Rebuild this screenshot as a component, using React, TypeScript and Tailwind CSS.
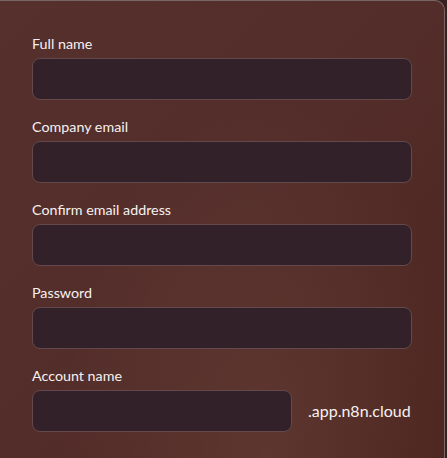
const fields = ['Full name', 'Company email', 'Confirm email address', 'Password'];

export default function App() {
    return (
        <div className="w-[447px] h-[458px] overflow-hidden bg-[#3a2020]" style={{ fontFamily: 'Lato, "Liberation Sans", sans-serif' }}>
            <div className="relative h-[480px] w-[445px] rounded-tr-[10px] border-t border-r border-[#7a6564] bg-gradient-to-br from-[#55302d] via-[#532d29] to-[#4b241e] px-8 pt-[33px]">
                <div className="pointer-events-none absolute inset-0 bg-[radial-gradient(ellipse_at_60%_95%,rgba(120,80,70,0.35),transparent_55%)]" />
                <div className="relative flex flex-col gap-[17px]">
                    {fields.map((label) => (
                        <div key={label} className="flex flex-col gap-1">
                            <label className="text-[14.3px] leading-5 text-[#f6f1f1]">{label}</label>
                            <input
                                type={label === 'Password' ? 'password' : 'text'}
                                className="h-[42px] w-full rounded-lg border border-[#64494c] bg-[#33212a] outline-none"
                            />
                        </div>
                    ))}
                    <div className="flex flex-col gap-1">
                        <label className="text-[14.3px] leading-5 text-[#f6f1f1]">Account name</label>
                        <div className="flex items-center gap-4">
                            <input type="text" className="h-[42px] w-[260px] rounded-lg border border-[#64494c] bg-[#33212a] outline-none" />
                            <span className="text-[16px] text-[#f6f1f1]">.app.n8n.cloud</span>
                        </div>
                    </div>
                </div>
            </div>
        </div>
    );
}
